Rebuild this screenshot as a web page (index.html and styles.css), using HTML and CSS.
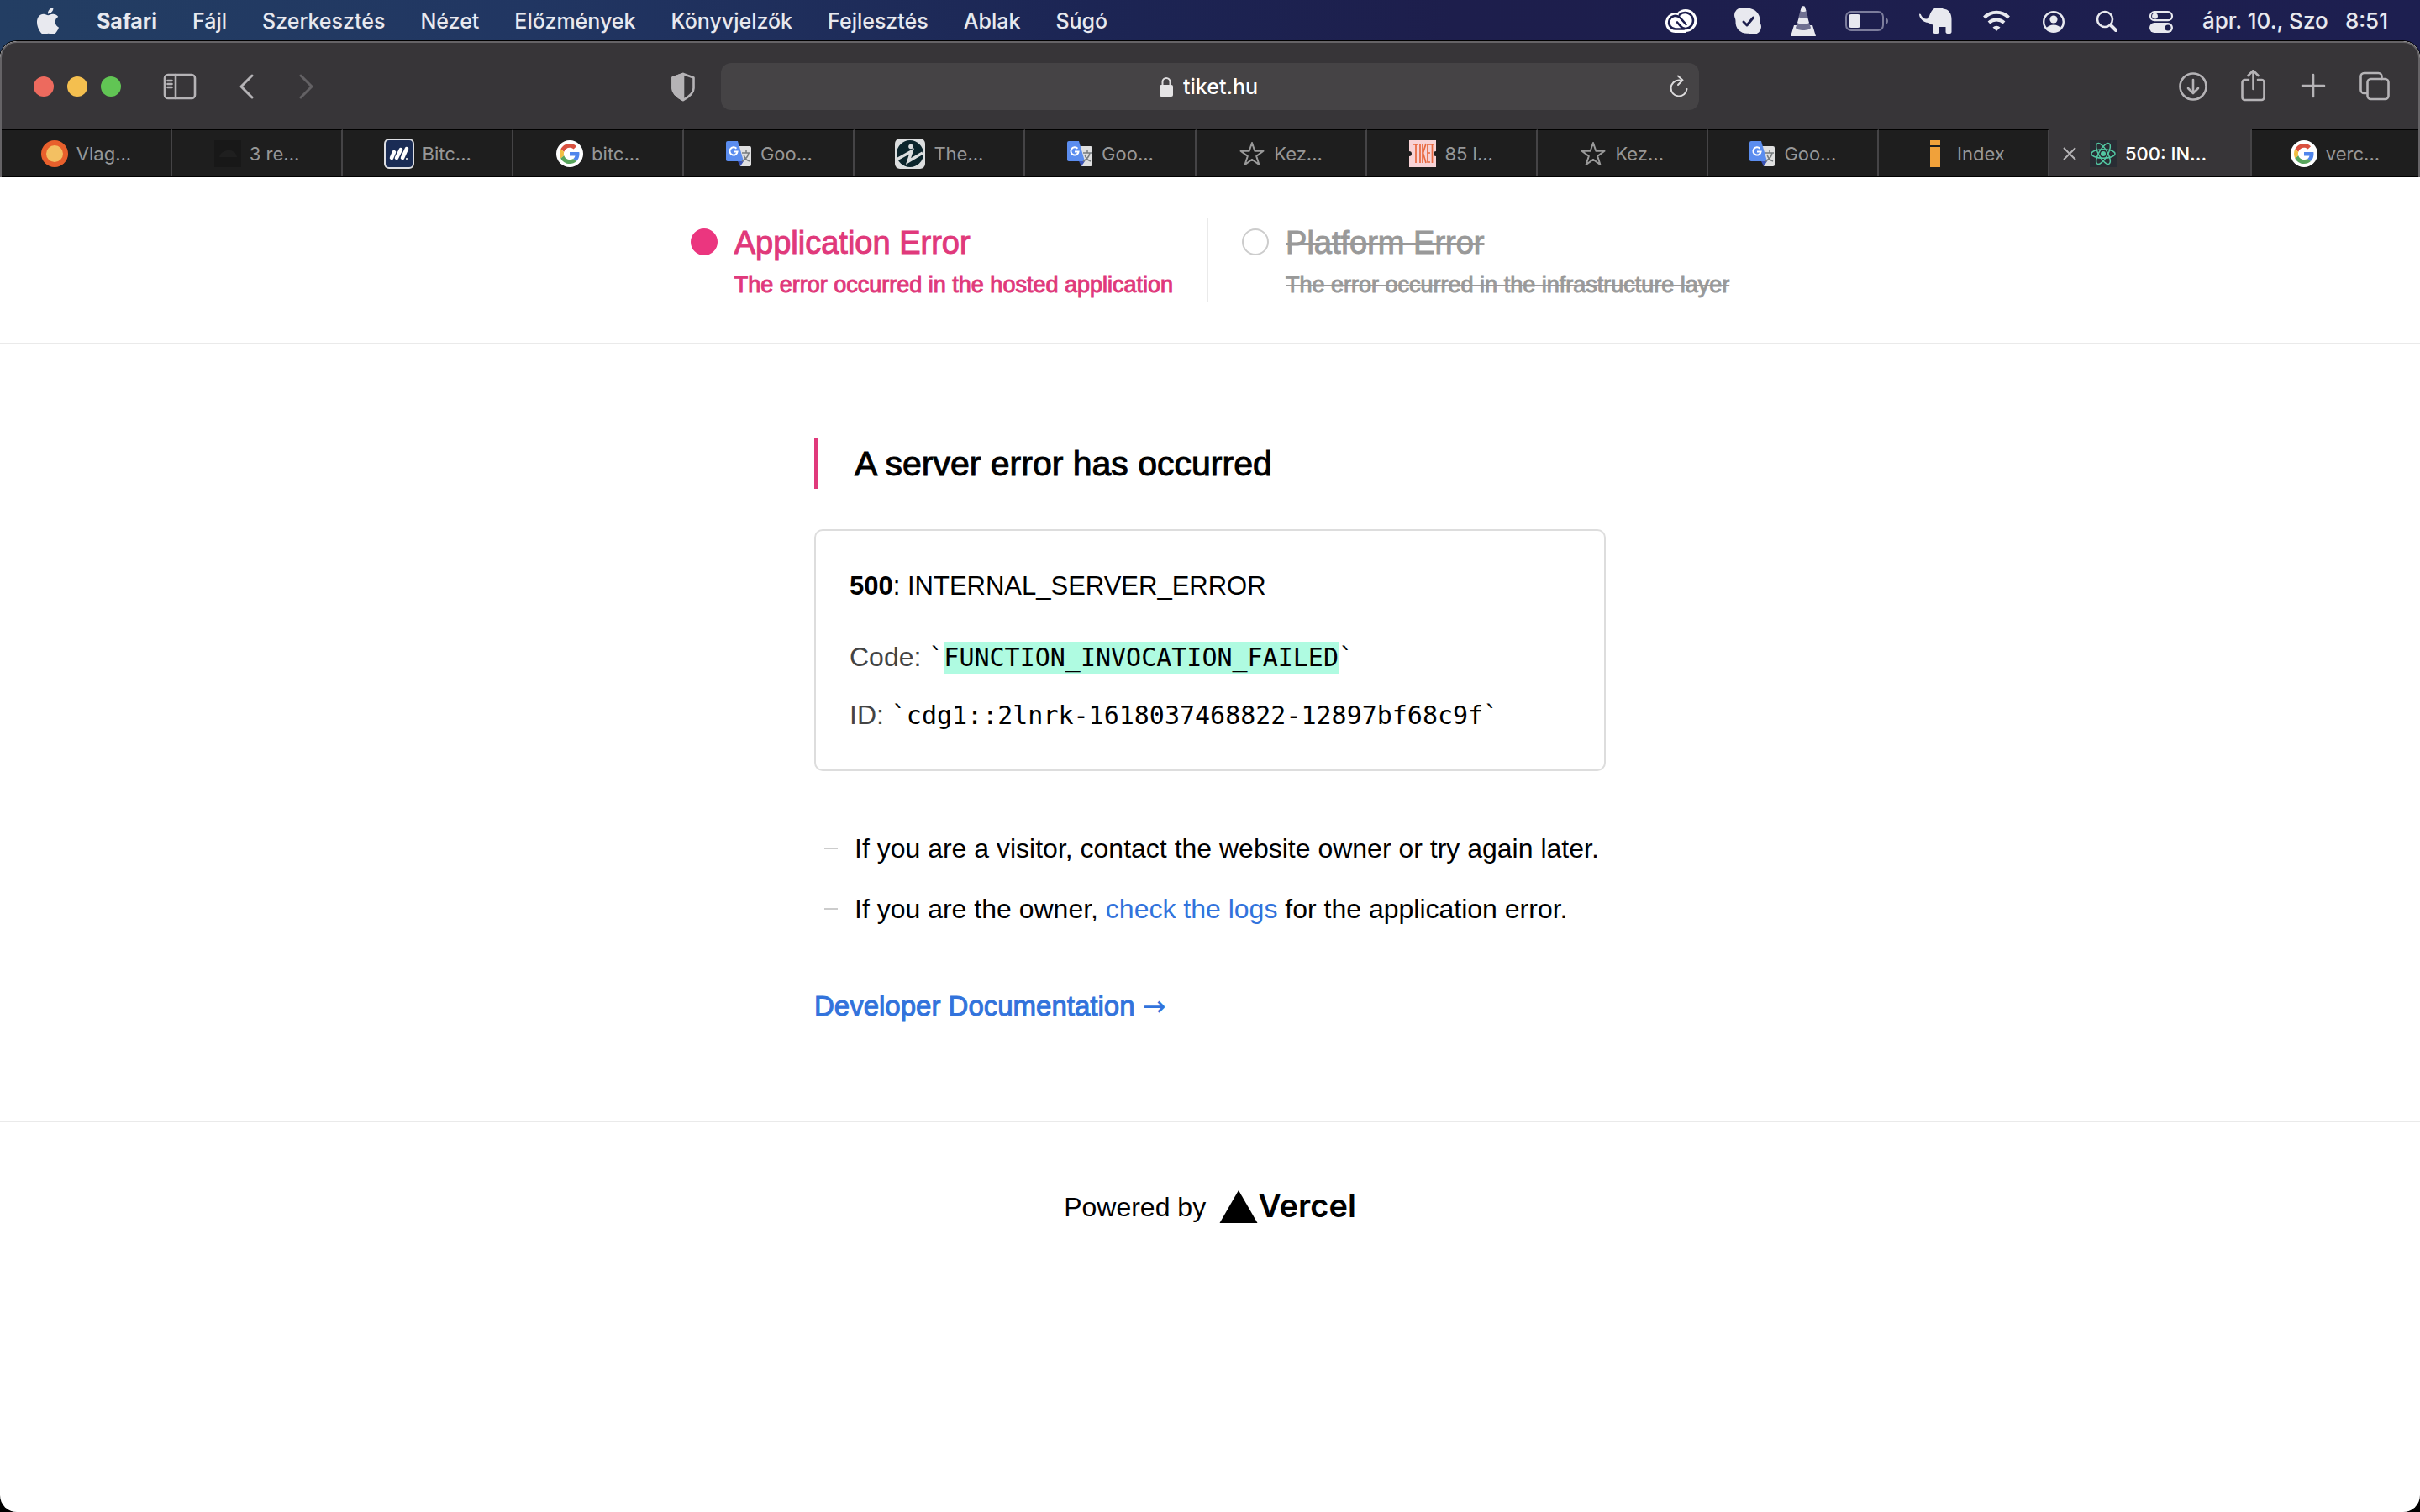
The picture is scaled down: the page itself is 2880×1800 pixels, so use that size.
FILE: index.html
```html
<!DOCTYPE html>
<html lang="hu">
<head>
    <meta charset="UTF-8">
    <meta name="viewport" content="width=device-width, initial-scale=1.0">
    <title>500: INTERNAL_SERVER_ERROR</title>
    <link rel="stylesheet" href="styles.css">
</head>
<body>
    <!-- shared icons -->
    <svg class="sprite" aria-hidden="true">
        <symbol id="google" viewBox="0 0 32 32">
            <circle cx="16" cy="16" r="16" fill="#fff"/>
            <g transform="translate(4 4) scale(.5)">
                <path fill="#d9503f" d="M24 9.5c3.54 0 6.71 1.22 9.21 3.6l6.85-6.85C35.9 2.38 30.47 0 24 0 14.62 0 6.51 5.38 2.56 13.22l7.98 6.19C12.43 13.72 17.74 9.5 24 9.5z"/>
                <path fill="#5086ec" d="M46.98 24.55c0-1.57-.15-3.09-.38-4.55H24v9.02h12.94c-.58 2.96-2.26 5.48-4.78 7.18l7.73 6c4.51-4.18 7.09-10.36 7.09-17.65z"/>
                <path fill="#f2be42" d="M10.53 28.59c-.48-1.45-.76-2.99-.76-4.59s.27-3.14.76-4.59l-7.98-6.19C.92 16.46 0 20.12 0 24c0 3.88.92 7.54 2.56 10.78l7.97-6.19z"/>
                <path fill="#58a55c" d="M24 48c6.48 0 11.93-2.13 15.89-5.81l-7.73-6c-2.15 1.45-4.92 2.3-8.16 2.3-6.26 0-11.57-4.22-13.47-9.91l-7.98 6.19C6.51 42.62 14.62 48 24 48z"/>
            </g>
        </symbol>
        <symbol id="translate" viewBox="0 0 32 32">
            <path fill="#dfdfe0" d="M14 7h15a2 2 0 0 1 2 2v20a2 2 0 0 1-2 2H18z"/>
            <path fill="#3a52b5" d="M15 25h7l-4 6z"/>
            <path fill="#5b8def" d="M3 1h12l7 24H3a2 2 0 0 1-2-2V3a2 2 0 0 1 2-2z"/>
            <path d="M20 15h10M25 12v3M28 15c-1 5-4 8-8 10M22 17c1 4 4 7 7 8" fill="none" stroke="#767b7e" stroke-width="1.5"/>
            <path d="M13.4 9.8a4.6 4.6 0 1 0 1.2 3.6H10" fill="none" stroke="#fff" stroke-width="2"/>
        </symbol>
        <symbol id="star" viewBox="0 0 32 32">
            <path d="M16 3l3.300 9.800H29.500l-8.300 6.100L24.400 29 16 22.900 7.600 29l3.200-10.100L2.500 12.800h10.200z" fill="none" stroke="#999" stroke-width="2" stroke-linejoin="round"/>
        </symbol>
    </svg>

    <!-- menu bar start-->
    <header class="menubar">
        <nav class="menus">
            <button type="button" class="menu" aria-label="Apple">
                <svg width="32" height="32" viewBox="0 0 24 24" fill="currentColor"><path d="M12.152 6.896c-.948 0-2.415-1.078-3.96-1.04-2.04.027-3.91 1.183-4.961 3.014-2.117 3.675-.546 9.103 1.519 12.09 1.013 1.454 2.208 3.09 3.792 3.039 1.52-.065 2.09-.987 3.935-.987 1.831 0 2.35.987 3.96.948 1.637-.026 2.676-1.48 3.676-2.948 1.156-1.688 1.636-3.325 1.662-3.415-.039-.013-3.182-1.221-3.22-4.857-.026-3.04 2.48-4.494 2.597-4.559-1.429-2.09-3.623-2.324-4.39-2.376-2-.156-3.675 1.09-4.61 1.09zM15.53 3.83c.843-1.012 1.4-2.427 1.245-3.83-1.207.052-2.662.805-3.532 1.818-.78.896-1.454 2.338-1.273 3.714 1.338.104 2.715-.688 3.559-1.701"/></svg>
            </button>
            <button type="button" class="menu menu-app">Safari</button>
            <button type="button" class="menu">Fájl</button>
            <button type="button" class="menu">Szerkesztés</button>
            <button type="button" class="menu">Nézet</button>
            <button type="button" class="menu">Előzmények</button>
            <button type="button" class="menu">Könyvjelzők</button>
            <button type="button" class="menu">Fejlesztés</button>
            <button type="button" class="menu">Ablak</button>
            <button type="button" class="menu">Súgó</button>
        </nav>
        <div class="status">
            <svg width="50" height="36" viewBox="0 0 50 36">
                <g fill="#fff"><circle cx="14" cy="20" r="12"/><circle cx="26" cy="17.500" r="13.500"/><path d="M13 20h14v12H13z"/></g>
                <path d="M19 10.500a9.500 9.500 0 1 1 7 16.500c-3 0-5-1.500-7-4l-3-3.500M24 27.500H14a7.800 7.800 0 1 1 5.500-13.300l7 7.800" fill="none" stroke="#1c1e4d" stroke-width="2.600" stroke-linecap="round"/>
            </svg>
            <svg width="32" height="36" viewBox="0 0 32 36">
                <path fill="#e8e9ef" d="M9 2c2 0 3 1 5 .7C24 2 31 9 30.500 18c0 3 1.500 4 1.500 7a9 9 0 0 1-9 9c-3 0-4-1.500-7-1.300C7 33 1 27 1.500 18 1.500 15 0 14 0 11a9 9 0 0 1 9-9z"/>
                <path d="M11 19l4 4 7.500-9" fill="none" stroke="#1c1e4d" stroke-width="3" stroke-linecap="round" stroke-linejoin="round"/>
            </svg>
            <svg width="32" height="36" viewBox="0 0 32 36">
                <path fill="#e8e9ef" d="M5 23h22l4 13H1z"/>
                <path fill="#6f7091" d="M9 20h14l2 6c-2 4-16 4-18 0z"/>
                <path fill="#e8e9ef" d="M11 13h10l2 7c-3 2.500-11 2.500-14 0z"/>
                <path fill="#6f7091" d="M12.500 6h7l2 7c-2 2-9 2-11 0z"/>
                <path fill="#e8e9ef" d="M14 1c0-1 4-1 4 0l1.500 5c-1 1.300-6 1.300-7 0z"/>
            </svg>
            <svg width="53" height="36" viewBox="0 0 53 36">
                <rect x="1" y="7" width="44" height="22" rx="6" fill="none" stroke="#7c7d9c" stroke-width="2"/>
                <rect x="4" y="10" width="14" height="16" rx="3" fill="#e8e9ef"/>
                <path fill="#7c7d9c" d="M48 14c4 1 4 7 0 8z"/>
            </svg>
            <svg width="42" height="36" viewBox="0 0 42 36" fill="#e8e9ef">
                <path d="M1 10c1-1 2 0 2.500 1.500 2 4 6 5 9 3C14 8 17 2 23 2c4 0 6 1.500 9 2 5 1 7.500 6 7.500 12v15c0 3-7 3-7 0v-6h-8v6c0 3-7 3-7 0v-9c-2 1-4-1-5-2C6 20 1 15 1 10z"/>
            </svg>
            <svg width="36" height="36" viewBox="0 0 36 36" fill="none" stroke="#e8e9ef" stroke-width="4">
                <path d="M2.500 14a20 20 0 0 1 29 0M8 20a13 13 0 0 1 18 0"/>
                <path d="M17 30l-4.500-4.500a7 7 0 0 1 9 0z" fill="#e8e9ef" stroke="none"/>
            </svg>
            <svg width="28" height="36" viewBox="0 0 28 36">
                <circle cx="15" cy="19" r="11.800" fill="none" stroke="#e8e9ef" stroke-width="2.400"/>
                <circle cx="15" cy="16" r="4.600" fill="#e8e9ef"/>
                <path fill="#e8e9ef" d="M6 27c3-6 15-6 18 0-5 5-13 5-18 0z"/>
            </svg>
            <svg width="30" height="36" viewBox="0 0 30 36" fill="none" stroke="#e8e9ef" stroke-linecap="round">
                <circle cx="14" cy="16" r="9" stroke-width="2.600"/><path d="M21 23l6 6" stroke-width="4"/>
            </svg>
            <svg width="32" height="36" viewBox="0 0 32 36">
                <rect x="4" y="7.200" width="26" height="10" rx="5" fill="none" stroke="#e8e9ef" stroke-width="2.200"/>
                <circle cx="9.500" cy="12.200" r="3.400" fill="#e8e9ef"/>
                <rect x="3" y="20" width="28" height="12" rx="6" fill="#e8e9ef"/>
                <circle cx="25" cy="26" r="3.600" fill="#1c1e4d"/>
            </svg>
            <time class="clock"><span>ápr. 10., Szo</span> <span>8:51</span></time>
        </div>
    </header>
    <!-- menu bar end-->

    <div class="window">
        <div class="chrome">
            <div class="toolbar">
                <div class="toolbar-left">
                    <div class="lights">
                        <button type="button" class="light light-red" aria-label="Close"></button>
                        <button type="button" class="light light-yellow" aria-label="Minimize"></button>
                        <button type="button" class="light light-green" aria-label="Zoom"></button>
                    </div>
                    <button type="button" class="tool tool-sidebar" aria-label="Sidebar">
                        <svg width="40" height="40" viewBox="0 0 40 40"><rect x="2" y="6" width="36" height="28" rx="4"/><path d="M15 6v28M5.500 13h5M5.500 17h5M5.500 21h5"/></svg>
                    </button>
                    <button type="button" class="tool tool-back" aria-label="Back">
                        <svg width="20" height="40" viewBox="0 0 20 40"><path d="M16 7L3 20l13 13" stroke-width="3"/></svg>
                    </button>
                    <button type="button" class="tool" aria-label="Forward" disabled>
                        <svg width="20" height="40" viewBox="0 0 20 40"><path d="M4 7l13 13L4 33" stroke-width="3"/></svg>
                    </button>
                    <button type="button" class="tool tool-shield" aria-label="Privacy report">
                        <svg width="30" height="40" viewBox="0 0 30 40"><path d="M15 5l12.500 4.500V22c0 6-5 10-12.500 14C7.500 32 2.500 28 2.500 22V9.500z"/><path d="M15 5v31C7.500 32 2.500 28 2.500 22V9.500z" fill="#b5b3b6"/></svg>
                    </button>
                </div>
                <div class="address">
                    <svg class="lock" width="16" height="24" viewBox="0 0 16 24"><path d="M3.500 11V6.500a4.500 4.500 0 0 1 9 0V11" fill="none" stroke="#dcdbdc" stroke-width="2"/><rect y="10" width="16" height="14" rx="2" fill="#e4e3e4"/></svg>
                    <input type="text" class="address-input" aria-label="Address" value="tiket.hu">
                    <button type="button" class="tool reload" aria-label="Reload">
                        <svg width="24" height="28" viewBox="0 0 24 28"><path d="M13 6.500h-1A9.500 9.500 0 1 0 21.500 17M11 1.500l5.500 5-5.500 5.500"/></svg>
                    </button>
                </div>
                <div class="toolbar-right">
                    <button type="button" class="tool" aria-label="Downloads">
                        <svg width="36" height="40" viewBox="0 0 36 40"><circle cx="18" cy="20" r="15.500"/><path d="M18 12v15M12 22l6 6 6-6"/></svg>
                    </button>
                    <button type="button" class="tool" aria-label="Share">
                        <svg width="36" height="40" viewBox="0 0 36 40"><path d="M12 12H7.500a3 3 0 0 0-3 3v18a3 3 0 0 0 3 3h20a3 3 0 0 0 3-3V15a3 3 0 0 0-3-3H23M17.500 23V1M11.500 7l6-6 6 6"/></svg>
                    </button>
                    <button type="button" class="tool" aria-label="New tab">
                        <svg width="36" height="40" viewBox="0 0 36 40"><path d="M17 6v26M4 19h26"/></svg>
                    </button>
                    <button type="button" class="tool" aria-label="Tab overview">
                        <svg width="36" height="40" viewBox="0 0 36 40"><rect x="9.500" y="11" width="25" height="24" rx="4"/><path d="M9 28H5.500a4 4 0 0 1-4-4V8a4 4 0 0 1 4-4h17a4 4 0 0 1 4 4v3"/></svg>
                    </button>
                </div>
            </div>

            <div class="tabs" role="tablist">
                <button type="button" class="tab" role="tab">
                    <svg class="favicon" viewBox="0 0 32 32"><circle cx="16" cy="16" r="16" fill="#e8602c"/><circle cx="16" cy="16" r="10" fill="#f3c062"/></svg>
                    <span>Vlag...</span>
                </button>
                <button type="button" class="tab" role="tab">
                    <svg class="favicon" viewBox="0 0 32 32"><rect width="32" height="32" fill="#181818"/><path d="M6 20c1-5 5-7 9-8 6-1 11 2 12 8z" fill="#1f1f1f"/></svg>
                    <span>3 re...</span>
                </button>
                <button type="button" class="tab" role="tab">
                    <svg class="favicon favicon-large" viewBox="0 0 36 36"><rect x="1" y="1" width="34" height="34" rx="5" fill="#1a2c55" stroke="#dddee2" stroke-width="2"/><path d="M9 23l3-7M15 23l5-10M22 23l5-11" stroke="#fff" stroke-width="4.500" stroke-linecap="round"/><circle cx="27" cy="24" r="1" fill="#fff"/></svg>
                    <span>Bitc...</span>
                </button>
                <button type="button" class="tab" role="tab">
                    <svg class="favicon"><use href="#google"/></svg>
                    <span>bitc...</span>
                </button>
                <button type="button" class="tab" role="tab">
                    <svg class="favicon"><use href="#translate"/></svg>
                    <span>Goo...</span>
                </button>
                <button type="button" class="tab" role="tab">
                    <svg class="favicon favicon-large" viewBox="0 0 36 36"><rect width="36" height="36" rx="6" fill="#dcdedf"/><circle cx="18" cy="18" r="16" fill="#0c252c"/><circle cx="19" cy="9.500" r="2.800" fill="#dcdedf"/><path d="M2 25l18-10-4 12 17-10" fill="none" stroke="#dcdedf" stroke-width="3.500"/></svg>
                    <span>The...</span>
                </button>
                <button type="button" class="tab" role="tab">
                    <svg class="favicon"><use href="#translate"/></svg>
                    <span>Goo...</span>
                </button>
                <button type="button" class="tab" role="tab">
                    <svg class="favicon"><use href="#star"/></svg>
                    <span>Kez...</span>
                </button>
                <button type="button" class="tab" role="tab">
                    <svg class="favicon" viewBox="0 0 32 32"><path d="M0 0h32v13a3 3 0 0 0 0 6v13H0V19a3 3 0 0 0 0-6z" fill="#f8d3d6"/><path d="M5 5h6M8 5v22M13 4v23M16 4v23M20 4l-3.500 11L20 27M25 5h-3v21h3M22 15h3M25 5h4M27.500 5v22" fill="none" stroke="#e8693f" stroke-width="1.700"/></svg>
                    <span>85 l...</span>
                </button>
                <button type="button" class="tab" role="tab">
                    <svg class="favicon"><use href="#star"/></svg>
                    <span>Kez...</span>
                </button>
                <button type="button" class="tab" role="tab">
                    <svg class="favicon"><use href="#translate"/></svg>
                    <span>Goo...</span>
                </button>
                <button type="button" class="tab" role="tab">
                    <svg class="favicon" viewBox="0 0 32 32"><path d="M10 0h12v6H10zM10 8h12v24H10z" fill="#f0a13a"/></svg>
                    <span>Index</span>
                </button>
                <button type="button" class="tab tab-active" role="tab" aria-selected="true">
                    <svg class="tab-close" width="16" height="16" viewBox="0 0 16 16"><path d="M1 1l14 14M15 1L1 15" stroke="#b5b3b6" stroke-width="2"/></svg>
                    <svg class="favicon" viewBox="0 0 32 32"><rect width="32" height="32" fill="#292d34"/><g fill="none" stroke="#53c7a2" stroke-width="1.500"><ellipse cx="16" cy="16" rx="14" ry="5.200"/><ellipse cx="16" cy="16" rx="14" ry="5.200" transform="rotate(60 16 16)"/><ellipse cx="16" cy="16" rx="14" ry="5.200" transform="rotate(120 16 16)"/></g><circle cx="16" cy="16" r="3" fill="#53c7a2"/></svg>
                    <span>500: IN...</span>
                </button>
                <button type="button" class="tab" role="tab">
                    <svg class="favicon"><use href="#google"/></svg>
                    <span>verc...</span>
                </button>
            </div>
        </div>

        <!-- page start-->
        <div class="page" lang="en">
            <section class="owners">
                <div class="owner owner-active">
                    <span class="dot"></span>
                    <div>
                        <h2 class="owner-title">Application Error</h2>
                        <p class="owner-text">The error occurred in the hosted application</p>
                    </div>
                </div>
                <div class="owner owner-off">
                    <span class="dot"></span>
                    <div>
                        <h2 class="owner-title">Platform Error</h2>
                        <p class="owner-text">The error occurred in the infrastructure layer</p>
                    </div>
                </div>
            </section>

            <main class="content">
                <h1 class="headline">A server error has occurred</h1>
                <div class="card">
                    <p class="status-line"><strong>500</strong>: INTERNAL_SERVER_ERROR</p>
                    <p class="detail">Code: <code>`<mark>FUNCTION_INVOCATION_FAILED</mark>`</code></p>
                    <p class="detail">ID: <code>`cdg1::2lnrk-1618037468822-12897bf68c9f`</code></p>
                </div>
                <ul class="hints">
                    <li>If you are a visitor, contact the website owner or try again later.</li>
                    <li>If you are the owner, <a href="#">check the logs</a> for the application error.</li>
                </ul>
                <a href="#" class="docs">Developer Documentation <span class="arrow">→</span></a>
            </main>

            <footer class="footer">
                <span>Powered by</span>
                <a href="#" class="brand">
                    <svg width="46" height="40" viewBox="0 0 46 40"><path d="M23 0l22.500 39H.5z"/></svg>
                    <span class="brand-name">Vercel</span>
                </a>
            </footer>
        </div>
        <!-- page end-->
    </div>
</body>
</html>
```

FILE: styles.css
```css
* {
    box-sizing: border-box;
}

body {
    margin: 0;
    min-height: 100vh;
    display: flex;
    flex-direction: column;
    background: linear-gradient(90deg, #233e63, #213662 22%, #1c2554 45%, #1d1e4c 60%, #1d1f50) top / 100% 90px no-repeat #000;
    font-family: Inter, "Liberation Sans", sans-serif;
}

button {
    padding: 0;
    border: 0;
    background: none;
    font: inherit;
    color: inherit;
}

h1, h2, p, ul {
    margin: 0;
    padding: 0;
    font-weight: normal;
}

a {
    color: #3273dc;
    text-decoration: none;
}

svg {
    display: block;
    flex: none;
}

.sprite {
    position: absolute;
    width: 0;
    height: 0;
}

/* menu bar */
.menubar {
    height: 49px;
    display: flex;
    justify-content: space-between;
    padding: 0 38px 0 20px;
    font-size: 25px;
    font-weight: 500;
    color: #e8e9ef;
}

.menus,
.status {
    display: flex;
    align-items: center;
}

.menu {
    padding: 0 21px;
    white-space: nowrap;
}

.menu-app {
    font-weight: 700;
}

.status {
    gap: 34px;
}

.clock {
    display: flex;
    justify-content: space-between;
    min-width: 221px;
    font-size: 26px;
    white-space: nowrap;
}

/* browser window */
.window {
    flex: 1;
    display: flex;
    flex-direction: column;
    border-radius: 20px;
    overflow: hidden;
    background-color: #fff;
    box-shadow: 0 0 0 1px #000;
}

.chrome {
    background-color: #373538;
    border: 2px solid #656366;
    border-bottom: 0;
    border-radius: 20px 20px 0 0;
}

.toolbar {
    height: 103px;
    display: grid;
    grid-template-columns: 1fr 40.5% 1fr;
    align-items: center;
}

.toolbar-left,
.toolbar-right {
    display: flex;
    align-items: center;
}

.toolbar-left {
    padding: 0 30px 0 38px;
}

.toolbar-right {
    justify-content: flex-end;
    gap: 36px;
    padding-right: 34px;
}

.lights {
    display: flex;
    gap: 16px;
    margin-right: 50px;
}

.light {
    width: 24px;
    height: 24px;
    border-radius: 50%;
}

.light-red {
    background-color: #ed6a5e;
}

.light-yellow {
    background-color: #f4bf4f;
}

.light-green {
    background-color: #61c554;
}

.tool svg {
    fill: none;
    stroke: #b5b3b6;
    stroke-width: 2.6;
    stroke-linecap: round;
    stroke-linejoin: round;
}

.tool:disabled {
    opacity: 0.35;
}

.tool-sidebar {
    margin-right: 50px;
}

.tool-back {
    margin-right: 50px;
}

.tool-shield {
    margin-left: auto;
}

.address {
    position: relative;
    height: 56px;
    display: flex;
    align-items: center;
    justify-content: center;
    gap: 12px;
    border-radius: 12px;
    background-color: #454345;
}

.address-input {
    width: 92px;
    padding: 0;
    border: 0;
    outline: 0;
    background: none;
    font: 500 25px Inter, "Liberation Sans", sans-serif;
    color: #fff;
}

.reload {
    position: absolute;
    right: 12px;
}

.reload svg {
    stroke: #dcdbdc;
    stroke-width: 2;
}

/* tabs */
.tabs {
    display: flex;
    height: 57px;
    border-bottom: 1px solid #000;
}

.tab {
    flex: 1;
    display: flex;
    align-items: center;
    justify-content: center;
    gap: 10px;
    border-top: 1px solid #000;
    border-right: 2px solid #454446;
    background-color: #1e1e1e;
    font-size: 22px;
    color: #979797;
    white-space: nowrap;
}

.tab:last-child {
    flex: 0 0 198px;
    border-right: 0;
}

.tab-active {
    flex: 0 0 241px;
    justify-content: flex-start;
    padding-left: 16px;
    border-top-color: #373538;
    background-color: #373538;
    font-weight: 500;
    color: #fff;
}

.tab-close {
    margin-right: 6px;
}

.favicon {
    width: 32px;
    height: 32px;
}

.favicon-large {
    width: 36px;
    height: 36px;
}

/* page */
.page {
    font-family: "Liberation Sans", Arial, sans-serif;
    font-size: 32px;
    color: #000;
}

.owners {
    display: flex;
    justify-content: center;
    padding: 49px 0 48px;
    border-bottom: 2px solid #eaeaea;
}

.owner {
    display: flex;
    gap: 20px;
    padding: 0 40px;
    color: #999;
}

.owner + .owner {
    border-left: 2px solid #eaeaea;
}

.owner-active {
    color: #e0397b;
}

.owner-off {
    text-decoration: line-through;
}

.dot {
    width: 32px;
    height: 32px;
    margin-top: 12px;
    border: 2px solid #ccc;
    border-radius: 50%;
}

.owner-active .dot {
    border-color: #eb367f;
    background-color: #eb367f;
}

.owner-title {
    font-size: 38px;
    line-height: 58px;
    -webkit-text-stroke: 1px;
}

.owner-text {
    font-size: 27px;
    line-height: 42px;
    -webkit-text-stroke: 1px;
}

.content {
    width: fit-content;
    min-width: 942px;
    margin: 0 auto;
    padding: 112px 0 110px;
}

.headline {
    padding-left: 44px;
    border-left: 4px solid #e0397b;
    font-size: 41px;
    line-height: 60px;
    -webkit-text-stroke: 1px;
}

.card {
    margin: 48px 0 56px;
    padding: 40px 40px 30px;
    border: 2px solid #ddd;
    border-radius: 10px;
}

.status-line {
    margin-bottom: 24px;
    font-size: 31px;
    line-height: 52px;
}

.detail {
    line-height: 68px;
    color: #444;
}

.detail code {
    font-family: "DejaVu Sans Mono", monospace;
    font-size: 30px;
    color: #000;
}

.detail mark {
    padding: 1px 0 2px;
    background-color: #affbe1;
}

.hints {
    list-style: none;
}

.hints li {
    display: flex;
    align-items: center;
    line-height: 72px;
    white-space: pre;
}

.hints li::before {
    content: "";
    width: 16px;
    height: 2px;
    margin: 0 20px 0 12px;
    background-color: #ccc;
}

.docs {
    display: inline-block;
    margin-top: 54px;
    font-size: 33px;
    line-height: 52px;
    -webkit-text-stroke: 1px;
}

.arrow {
    font-family: "DejaVu Sans", sans-serif;
    -webkit-text-stroke: 0;
}

.footer {
    display: flex;
    align-items: center;
    justify-content: center;
    gap: 16px;
    padding: 76px 0;
    border-top: 2px solid #eaeaea;
}

.brand {
    display: flex;
    align-items: center;
    color: #000;
}

.brand-name {
    padding-bottom: 4px;
    font: 600 38px Inter, sans-serif;
}
```
